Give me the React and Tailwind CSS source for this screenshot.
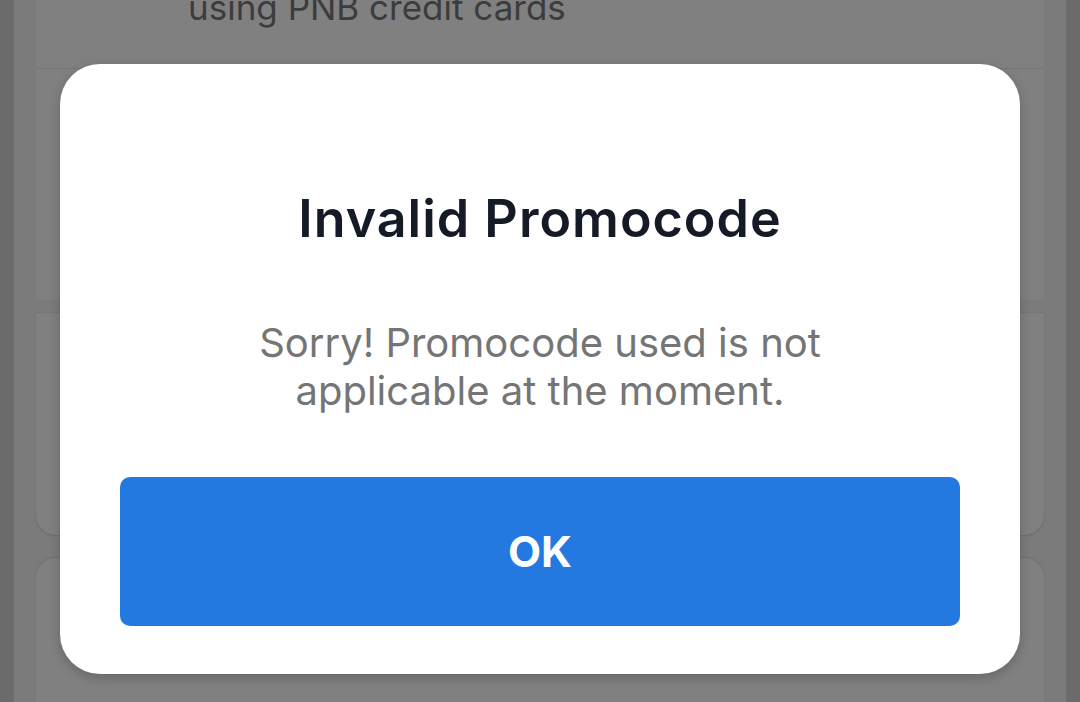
export default function App() {
  const font = { fontFamily: 'Inter, Roboto, "Noto Sans", sans-serif' };
  return (
    <div className="relative w-[1080px] h-[702px] overflow-hidden bg-[#6b6b6b] flex" style={font}>
      <div className="mx-[14px] flex-1 bg-[#7b7b7b] px-[22px] flex flex-col">
        <div className="h-[300px] bg-[#808080] flex flex-col shrink-0">
          <div className="h-[69px] border-b border-[#777777] relative">
            <div className="absolute left-[152px] top-[-13px] text-[35px] leading-[40px] text-[#3c3c3c] whitespace-nowrap">
              using PNB credit cards
            </div>
          </div>
          <div className="flex-1"></div>
        </div>
        <div className="h-[12px] shrink-0"></div>
        <div className="h-[223px] bg-[#808080] rounded-b-[20px] border-t border-[#767676] shadow-[0_1px_2px_rgba(0,0,0,0.15)] shrink-0"></div>
        <div className="h-[23px] shrink-0"></div>
        <div className="flex-1 bg-[#808080] rounded-t-[20px] shadow-[0_-1px_2px_rgba(0,0,0,0.1)]"></div>
      </div>

      <div className="absolute left-[60px] top-[64px] w-[960px] h-[610px] bg-white rounded-[40px] shadow-[0_4px_12px_rgba(0,0,0,0.2)] flex flex-col items-center px-[60px] pt-[124px] pb-[48px]">
        <div className="text-[52px] leading-[62px] tracking-[1px] font-semibold text-[#141a26] whitespace-nowrap">
          Invalid Promocode
        </div>
        <div className="mt-[69px] text-[40px] leading-[48px] text-[#757575] text-center whitespace-nowrap">
          Sorry! Promocode used is not
          <br />
          applicable at the moment.
        </div>
        <button className="mt-[62px] w-full h-[149px] rounded-[10px] bg-[#2379e0] text-white text-[43px] font-bold flex items-center justify-center">
          OK
        </button>
      </div>
    </div>
  );
}
